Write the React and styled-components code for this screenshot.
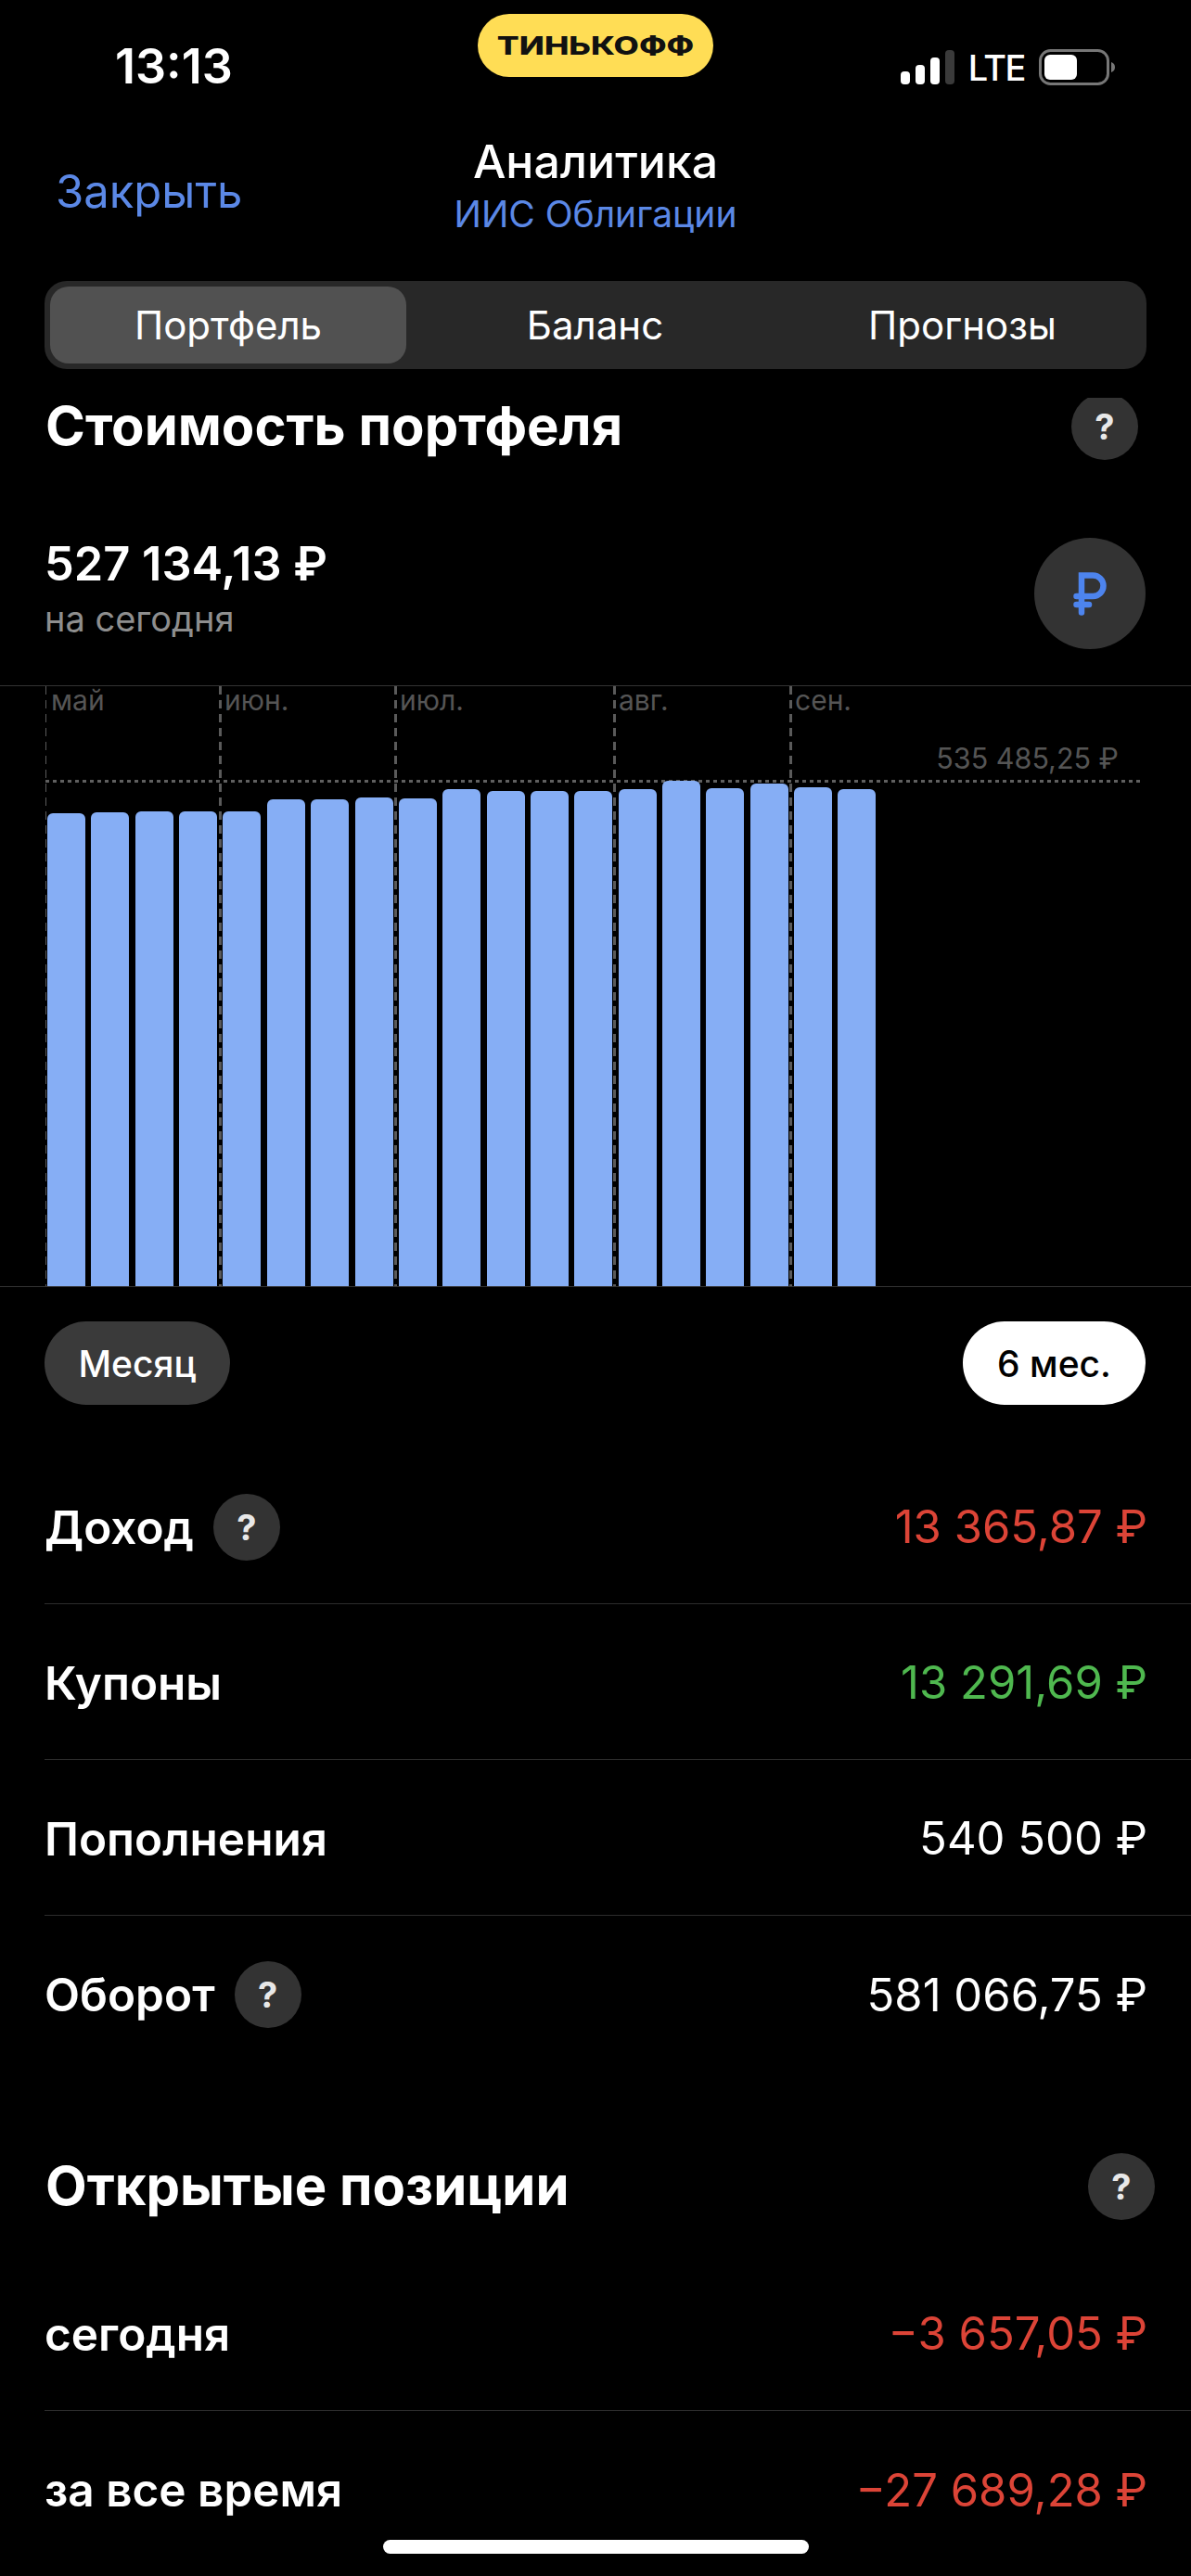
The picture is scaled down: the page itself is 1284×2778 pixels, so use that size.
import React from "react";
import styled, { createGlobalStyle } from "styled-components";

const GlobalStyle = createGlobalStyle`
  html, body {
    margin: 0;
    background: #000;
  }
  * {
    box-sizing: border-box;
  }
`;

const Screen = styled.div`
  position: relative;
  width: 1284px;
  height: 2778px;
  overflow: hidden;
  background: #000;
  color: #fff;
  font-family: Inter, "Noto Sans", sans-serif;
`;

const Header = styled.header`
  padding-bottom: 31px;
`;

const StatusBar = styled.div`
  display: grid;
  grid-template-columns: 1fr auto 1fr;
  height: 150px;
`;

const Time = styled.div`
  margin: 46px 0 0 124px;
  font-size: 52px;
  line-height: 52px;
  font-weight: 600;
`;

const Logo = styled.div`
  display: flex;
  align-items: center;
  justify-content: center;
  width: 254px;
  height: 68px;
  margin-top: 15px;
  border-radius: 34px;
  background: #ffdd55;
  color: #111;
  font-size: 27px;
  font-weight: 800;
  span {
    transform: scaleX(1.31);
  }
`;

const StatusIcons = styled.div`
  display: flex;
  justify-content: flex-end;
  align-items: flex-start;
  gap: 15px;
  padding: 53px 82px 0 0;
`;

const Lte = styled.span`
  font-size: 38px;
  line-height: 38px;
  font-weight: 500;
  letter-spacing: -1.5px;
  margin-top: 1px;
`;

const Nav = styled.nav`
  display: grid;
  grid-template-columns: 1fr auto 1fr;
  padding: 0 60px;
  margin-bottom: 50px;
`;

const CloseLink = styled.span`
  margin-top: 11px;
  align-self: center;
  color: #5b88e6;
  font-size: 49px;
  line-height: 60px;
`;

const TitleBlock = styled.div`
  display: flex;
  flex-direction: column;
  align-items: center;
  gap: 11px;
`;

const Title = styled.div`
  font-size: 50px;
  line-height: 48px;
  font-weight: 500;
`;

const Subtitle = styled.div`
  color: #5b88e6;
  font-size: 39px;
  line-height: 44px;
`;

const Segments = styled.div`
  display: grid;
  grid-template-columns: 384px 407px 1fr;
  height: 95px;
  margin: 0 48px;
  padding: 6px;
  border-radius: 24px;
  background: #282828;
`;

const Segment = styled.div`
  display: flex;
  align-items: center;
  justify-content: center;
  border-radius: 20px;
  font-size: 42px;
  background: ${(props) => (props.active ? "#515151" : "transparent")};
`;

const Content = styled.main`
  overflow: hidden;
  height: 2349px;
`;

const SectionHead = styled.div`
  display: flex;
  align-items: center;
  justify-content: space-between;
  height: 72px;
  margin-top: ${(props) => props.top}px;
  padding: 0 ${(props) => props.right}px 0 49px;
`;

const SectionTitle = styled.h2`
  margin: 0 0 2px;
  font-size: 58px;
  line-height: 60px;
  font-weight: 700;
`;

const Help = styled.span`
  display: flex;
  flex: none;
  align-items: center;
  justify-content: center;
  width: 72px;
  height: 72px;
  border-radius: 50%;
  background: #333;
  color: #e8e8e8;
  font-size: 38px;
  font-weight: 700;
`;

const Summary = styled.div`
  display: flex;
  align-items: flex-start;
  justify-content: space-between;
  margin-top: 84px;
  padding: 0 49px 0 48px;
`;

const SummaryValue = styled.div`
  font-size: 50.500px;
  line-height: 56px;
  font-weight: 600;
`;

const SummaryNote = styled.div`
  margin-top: 9px;
  color: #8e8e8e;
  font-size: 38px;
  line-height: 44px;
`;

const CurrencyButton = styled.div`
  display: flex;
  align-items: center;
  justify-content: center;
  width: 120px;
  height: 120px;
  border-radius: 50%;
  background: #333;
`;

const Chart = styled.div`
  position: relative;
  display: flex;
  align-items: flex-end;
  gap: 6.36px;
  height: 649px;
  margin-top: 39px;
  padding-left: 51px;
  border-top: 1px solid #333;
  border-bottom: 1px solid #333;
`;

const Bar = styled.div`
  position: relative;
  flex: none;
  width: 41px;
  border-radius: 6px 6px 0 0;
  background: #86aef5;
`;

const MonthLine = styled.div`
  position: absolute;
  top: 0;
  bottom: 0;
  width: ${(props) => (props.thin ? 1 : 3)}px;
  background: repeating-linear-gradient(to bottom, #5a5a5a 0 9px, transparent 9px 15px);
`;

const MonthLabel = styled.span`
  position: absolute;
  top: -5px;
  left: 6px;
  color: #555;
  font-size: 30px;
  line-height: 40px;
`;

const MaxLine = styled.div`
  position: absolute;
  top: 101px;
  left: 49px;
  width: 1181px;
  height: 3px;
  background: repeating-linear-gradient(to right, #5f5f5f 0 4.500px, transparent 4.500px 8px);
`;

const MaxLabel = styled.span`
  position: absolute;
  top: 60px;
  right: 78px;
  color: #555;
  font-size: 30.500px;
  line-height: 36px;
`;

const Filters = styled.div`
  display: flex;
  justify-content: space-between;
  margin-top: 37px;
  margin-bottom: 47px;
  padding: 0 49px 0 48px;
`;

const Filter = styled.div`
  display: flex;
  align-items: center;
  justify-content: center;
  width: ${(props) => props.width}px;
  height: 90px;
  border-radius: 45px;
  font-size: 39px;
  font-weight: 500;
  background: ${(props) => (props.active ? "#fff" : "#3a3a3a")};
  color: ${(props) => (props.active ? "#000" : "#fff")};
`;

const Row = styled.div`
  display: flex;
  align-items: center;
  justify-content: space-between;
  height: 168px;
  margin-left: 48px;
  padding: 2px 47px 0 0;
  border-bottom: ${(props) => (props.last ? "none" : "1px solid #2c2c2c")};
`;

const RowLabel = styled.div`
  display: flex;
  align-items: center;
  gap: 21px;
  font-size: 49.500px;
  font-weight: 600;
`;

const RowValue = styled.div`
  font-size: 49px;
  color: ${(props) => props.color || "#fff"};
`;

const Spacer = styled.div`
  height: 38px;
`;

const HomeIndicator = styled.div`
  position: absolute;
  left: 413px;
  bottom: 24px;
  width: 459px;
  height: 15px;
  border-radius: 8px;
  background: #fff;
`;

const RED = "#dc4437";
const GREEN = "#4fb84f";

const months = [
  { name: "май", x: 49, thin: true },
  { name: "июн.", x: 236 },
  { name: "июл.", x: 425 },
  { name: "авг.", x: 661 },
  { name: "сен.", x: 851 },
];

const barTops = [
  877, 876, 875, 875, 875, 862, 862, 860, 861, 851, 853, 853, 853, 851, 842,
  850, 845, 849, 851,
];

const stats = [
  { label: "Доход", value: "13 365,87 ₽", color: RED, help: true },
  { label: "Купоны", value: "13 291,69 ₽", color: GREEN },
  { label: "Пополнения", value: "540 500 ₽" },
  { label: "Оборот", value: "581 066,75 ₽", help: true, last: true },
];

const SignalIcon = () => (
  <svg width="58" height="38" viewBox="0 0 58 38">
    <rect x="0" y="24" width="10" height="14" rx="4" fill="#fff" />
    <rect x="16" y="17" width="10" height="21" rx="4" fill="#fff" />
    <rect x="32" y="9" width="10" height="29" rx="4" fill="#fff" />
    <rect x="48" y="1" width="10" height="37" rx="4" fill="#3a3a3a" />
  </svg>
);

const BatteryIcon = () => (
  <svg width="82" height="40" viewBox="0 0 82 40">
    <rect x="1.500" y="1.500" width="73" height="36" rx="11" fill="none" stroke="#777" strokeWidth="3" />
    <rect x="6" y="6" width="35" height="27" rx="6" fill="#fff" />
    <path d="M78 14c3 1 4 3 4 5.500s-1 4.500-4 5.500z" fill="#777" />
  </svg>
);

const RubleIcon = () => (
  <svg width="38" height="48" viewBox="0 0 38 48" fill="none" stroke="#4d84ee" strokeWidth="6.500" strokeLinecap="round">
    <path d="M10 44.500V4.500h12.250a11.250 11.250 0 0 1 0 22.500H4.500" />
    <path d="M4.500 36H18" />
  </svg>
);

export default function App() {
  return (
    <Screen>
      <GlobalStyle />
      <Header>
        <StatusBar>
          <Time>13:13</Time>
          <Logo>
            <span>ТИНЬКОФФ</span>
          </Logo>
          <StatusIcons>
            <SignalIcon />
            <Lte>LTE</Lte>
            <BatteryIcon />
          </StatusIcons>
        </StatusBar>
        <Nav>
          <CloseLink>Закрыть</CloseLink>
          <TitleBlock>
            <Title>Аналитика</Title>
            <Subtitle>ИИС Облигации</Subtitle>
          </TitleBlock>
        </Nav>
        <Segments>
          <Segment active>Портфель</Segment>
          <Segment>Баланс</Segment>
          <Segment>Прогнозы</Segment>
        </Segments>
      </Header>
      <Content>
        <SectionHead top={-5} right={57}>
          <SectionTitle>Стоимость портфеля</SectionTitle>
          <Help>?</Help>
        </SectionHead>
        <Summary>
          <div>
            <SummaryValue>527 134,13 ₽</SummaryValue>
            <SummaryNote>на сегодня</SummaryNote>
          </div>
          <CurrencyButton>
            <RubleIcon />
          </CurrencyButton>
        </Summary>
        <Chart>
          {months.map((m) => (
            <MonthLine key={m.name} thin={m.thin} style={{ left: m.x }}>
              <MonthLabel>{m.name}</MonthLabel>
            </MonthLine>
          ))}
          <MaxLine />
          <MaxLabel>535 485,25 ₽</MaxLabel>
          {barTops.map((top, i) => (
            <Bar key={i} style={{ height: 1387 - top }} />
          ))}
        </Chart>
        <Filters>
          <Filter width={200}>Месяц</Filter>
          <Filter width={197} active>
            6 мес.
          </Filter>
        </Filters>
        {stats.map((s) => (
          <Row key={s.label} last={s.last}>
            <RowLabel>
              {s.label}
              {s.help && <Help>?</Help>}
            </RowLabel>
            <RowValue color={s.color}>{s.value}</RowValue>
          </Row>
        ))}
        <SectionHead top={88} right={39}>
          <SectionTitle>Открытые позиции</SectionTitle>
          <Help>?</Help>
        </SectionHead>
        <Spacer />
        <Row>
          <RowLabel>сегодня</RowLabel>
          <RowValue color={RED}>−3 657,05 ₽</RowValue>
        </Row>
        <Row last>
          <RowLabel>за все время</RowLabel>
          <RowValue color={RED}>−27 689,28 ₽</RowValue>
        </Row>
      </Content>
      <HomeIndicator />
    </Screen>
  );
}
